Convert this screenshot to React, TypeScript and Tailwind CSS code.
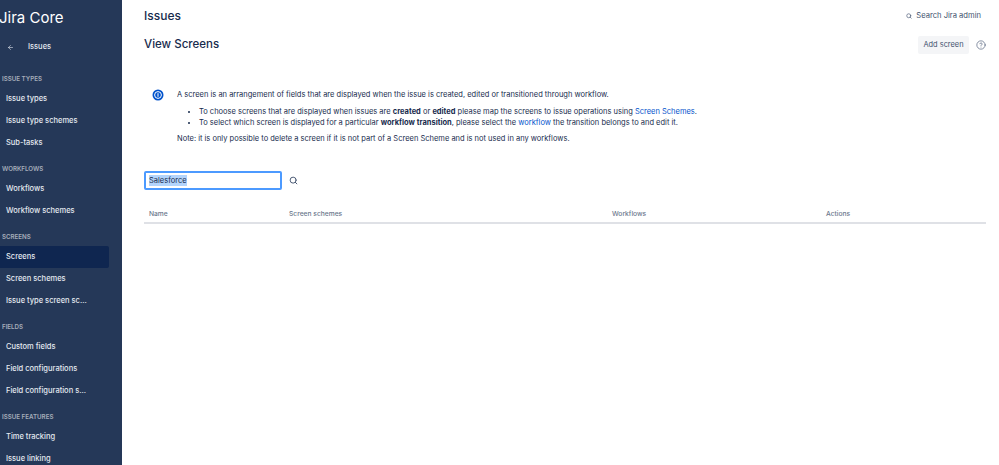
import React from 'react';
import { ArrowLeft, Search, HelpCircle } from 'lucide-react';

const groups = [
  { title: 'ISSUE TYPES', items: ['Issue types', 'Issue type schemes', 'Sub-tasks'] },
  { title: 'WORKFLOWS', items: ['Workflows', 'Workflow schemes'] },
  { title: 'SCREENS', items: ['Screens', 'Screen schemes', 'Issue type screen sc...'] },
  { title: 'FIELDS', items: ['Custom fields', 'Field configurations', 'Field configuration s...'] },
  { title: 'ISSUE FEATURES', items: ['Time tracking', 'Issue linking'] },
];

function Sidebar() {
  return (
    <aside className="w-[122px] h-[465px] shrink-0 overflow-hidden bg-[#253858] text-[#e4e9f0]">
      <div className="h-[34px] flex items-center -ml-[1px] text-[15px] leading-none text-white">Jira Core</div>
      <div className="h-[24px] mt-[1px] flex items-center pl-[7px] text-[7.5px] font-medium">
        <ArrowLeft className="w-[7px] h-[7px]" strokeWidth={2} />
        <span className="ml-[14px]">Issues</span>
      </div>
      <nav className="pt-[11px]">
        {groups.map((group) => (
          <div key={group.title} className="mb-[6px]">
            <div className="h-[18px] flex items-center pl-[2px] text-[6.2px] font-semibold text-[#a5adba]">{group.title}</div>
            {group.items.map((item) => (
              <div
                key={item}
                className={
                  item === 'Screens'
                    ? 'h-[22px] w-[109px] flex items-center pl-[6px] text-[7.5px] font-medium rounded-r-[2px] bg-[#0f2650]'
                    : 'h-[22px] flex items-center pl-[6px] text-[7.5px] font-medium'
                }
              >
                {item}
              </div>
            ))}
          </div>
        ))}
      </nav>
    </aside>
  );
}

function InfoIcon() {
  return (
    <svg width="12" height="12" viewBox="0 0 12 12" className="shrink-0">
      <circle cx="6" cy="6" r="5.5" fill="#0052cc" />
      <circle cx="6" cy="6" r="3.4" fill="none" stroke="#ffffff" strokeWidth="1" />
      <rect x="5.5" y="4.2" width="1" height="3.6" fill="#ffffff" />
    </svg>
  );
}

export default function App() {
  return (
    <div
      className="w-[999px] h-[465px] flex overflow-hidden bg-white text-[#172b4d]"
      style={{ fontFamily: 'Inter, "Liberation Sans", sans-serif' }}
    >
      <Sidebar />
      <main className="flex-1 pl-[22px] pr-[13px]">
        <div className="h-[32px] flex items-center justify-between">
          <h2 className="text-[12px] font-medium">Issues</h2>
          <div className="flex items-center gap-[4px] mr-[5px] text-[7.6px] text-[#42526e]">
            <Search className="w-[6px] h-[6px]" strokeWidth={2.5} />
            <span>Search Jira admin</span>
          </div>
        </div>
        <div className="h-[24px] mt-[1px] flex items-center justify-between">
          <h1 className="text-[11.5px] font-medium">View Screens</h1>
          <div className="flex items-center">
            <button className="h-[18px] w-[51px] rounded-[2px] bg-[#f4f5f7] text-[7.4px] text-[#42526e]">Add screen</button>
            <HelpCircle className="ml-[7px] w-[10px] h-[10px] text-[#42526e]" strokeWidth={1.5} />
          </div>
        </div>

        <section className="mt-[30px] flex pl-[8px]">
          <div className="pt-[2px]"><InfoIcon /></div>
          <div className="ml-[13px] text-[7.5px] leading-[11px] text-[#172b4d]">
            <p className="pt-[2px]">A screen is an arrangement of fields that are displayed when the issue is created, edited or transitioned through workflow.</p>
            <ul className="mt-[6px] pl-[22px] list-disc">
              <li>
                To choose screens that are displayed when issues are <b>created</b> or <b>edited</b> please map the screens to issue operations using <span className="text-[#0052cc]">Screen Schemes</span>.
              </li>
              <li>
                To select which screen is displayed for a particular <b>workflow transition</b>, please select the <span className="text-[#0052cc]">workflow</span> the transition belongs to and edit it.
              </li>
            </ul>
            <p className="mt-[5px]">Note: it is only possible to delete a screen if it is not part of a Screen Scheme and is not used in any workflows.</p>
          </div>
        </section>

        <div className="mt-[27px] flex items-center">
          <div className="w-[138px] h-[19px] flex items-center rounded-[2px] border-2 border-[#4c9aff] pl-[3px] text-[7.5px]">
            <span className="bg-[#b3d4fc]">Salesforce</span>
          </div>
          <Search className="ml-[7px] w-[9px] h-[9px] text-[#42526e]" strokeWidth={2.5} />
        </div>

        <div className="mt-[16px] h-[18px] flex items-center border-b-2 border-[#dfe1e6] text-[6.7px] font-medium text-[#6b778c]">
          <div className="w-[145px] pl-[5px]">Name</div>
          <div className="w-[323px]">Screen schemes</div>
          <div className="w-[214px]">Workflows</div>
          <div>Actions</div>
        </div>
      </main>
    </div>
  );
}
